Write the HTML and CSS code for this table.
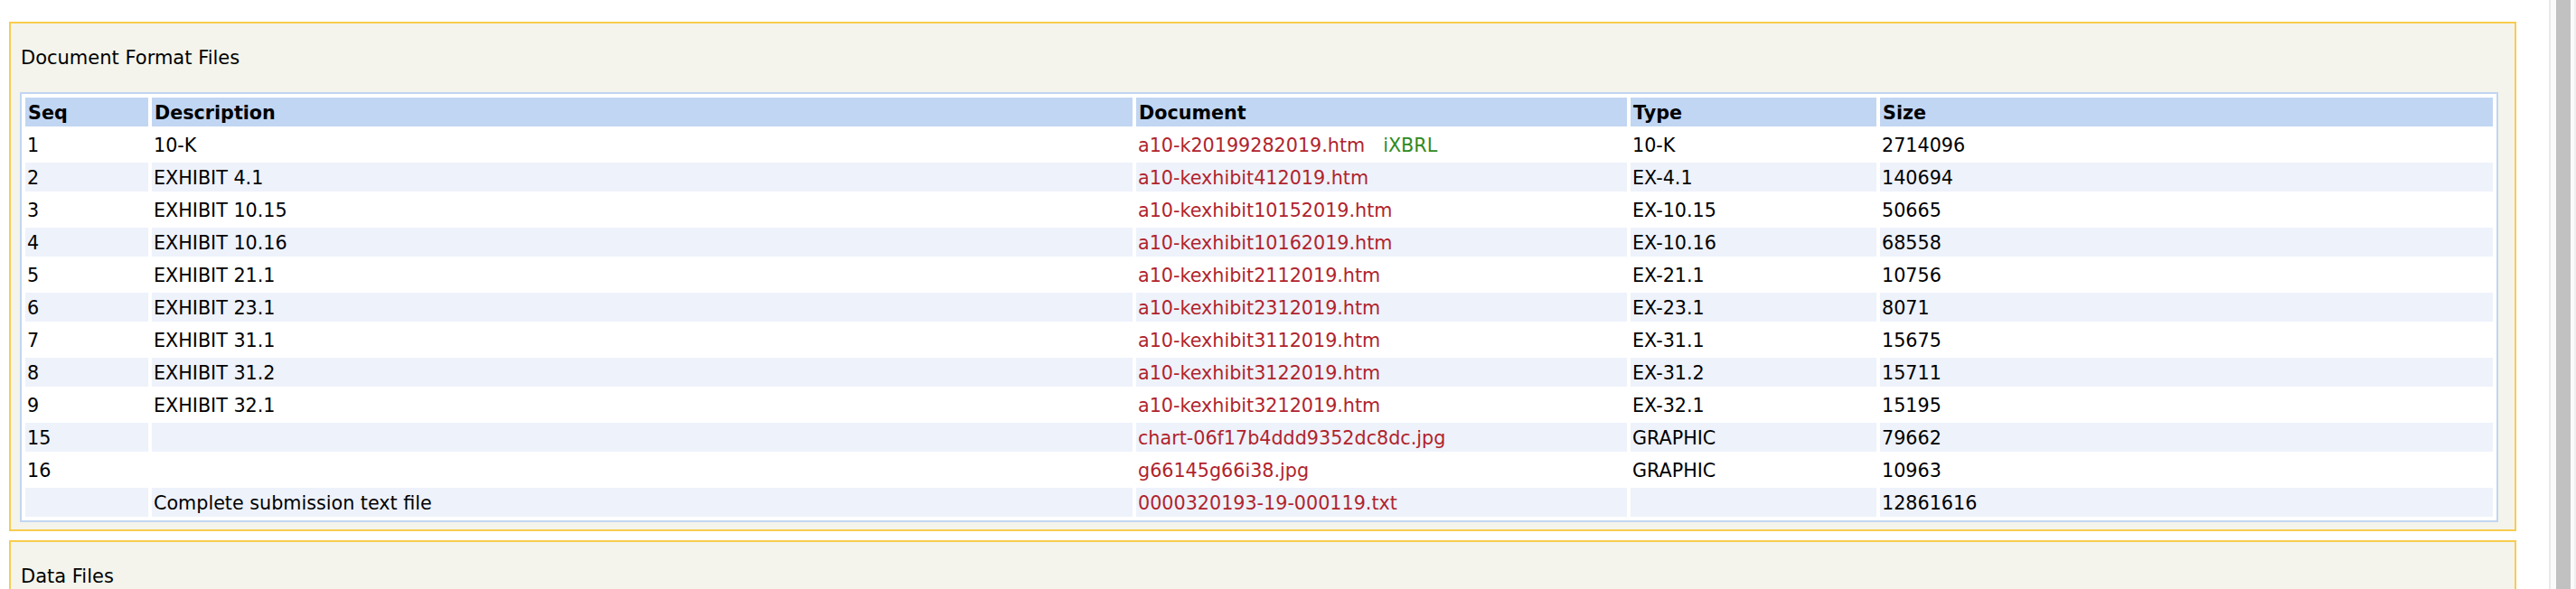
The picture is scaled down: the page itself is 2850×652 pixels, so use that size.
FILE: index.html
```html
<!DOCTYPE html>
<html>
<head>
<meta charset="utf-8">
<title>Document Format Files</title>
<link rel="stylesheet" href="styles.css">
</head>
<body>
<main class="page">
  <section class="box">
    <div class="box-title">Document Format Files</div>
    <table class="files">
      <thead>
        <tr>
          <th class="c-seq">Seq</th>
          <th class="c-desc">Description</th>
          <th class="c-doc">Document</th>
          <th class="c-type">Type</th>
          <th class="c-size">Size</th>
        </tr>
      </thead>
      <tbody>
        <tr><td>1</td><td>10-K</td><td><a href="#">a10-k20199282019.htm</a><span class="ixbrl">iXBRL</span></td><td>10-K</td><td>2714096</td></tr>
        <tr class="alt"><td>2</td><td>EXHIBIT 4.1</td><td><a href="#">a10-kexhibit412019.htm</a></td><td>EX-4.1</td><td>140694</td></tr>
        <tr><td>3</td><td>EXHIBIT 10.15</td><td><a href="#">a10-kexhibit10152019.htm</a></td><td>EX-10.15</td><td>50665</td></tr>
        <tr class="alt"><td>4</td><td>EXHIBIT 10.16</td><td><a href="#">a10-kexhibit10162019.htm</a></td><td>EX-10.16</td><td>68558</td></tr>
        <tr><td>5</td><td>EXHIBIT 21.1</td><td><a href="#">a10-kexhibit2112019.htm</a></td><td>EX-21.1</td><td>10756</td></tr>
        <tr class="alt"><td>6</td><td>EXHIBIT 23.1</td><td><a href="#">a10-kexhibit2312019.htm</a></td><td>EX-23.1</td><td>8071</td></tr>
        <tr><td>7</td><td>EXHIBIT 31.1</td><td><a href="#">a10-kexhibit3112019.htm</a></td><td>EX-31.1</td><td>15675</td></tr>
        <tr class="alt"><td>8</td><td>EXHIBIT 31.2</td><td><a href="#">a10-kexhibit3122019.htm</a></td><td>EX-31.2</td><td>15711</td></tr>
        <tr><td>9</td><td>EXHIBIT 32.1</td><td><a href="#">a10-kexhibit3212019.htm</a></td><td>EX-32.1</td><td>15195</td></tr>
        <tr class="alt"><td>15</td><td></td><td><a href="#">chart-06f17b4ddd9352dc8dc.jpg</a></td><td>GRAPHIC</td><td>79662</td></tr>
        <tr><td>16</td><td></td><td><a href="#">g66145g66i38.jpg</a></td><td>GRAPHIC</td><td>10963</td></tr>
        <tr class="alt"><td>&nbsp;</td><td>Complete submission text file</td><td><a href="#">0000320193-19-000119.txt</a></td><td>&nbsp;</td><td>12861616</td></tr>
      </tbody>
    </table>
  </section>
  <section class="box">
    <div class="box-title">Data Files</div>
    <div class="box-fill"></div>
  </section>
</main>
<aside class="scrollbar"><div class="scroll-track"><div class="scroll-thumb"></div></div></aside>
</body>
</html>
```
FILE: styles.css
```css
html, body {
  margin: 0;
  padding: 0;
  height: 652px;
  overflow: hidden;
  background: #ffffff;
}

body {
  display: flex;
  font-family: "DejaVu Sans", "Liberation Sans", Arial, sans-serif;
  color: #000;
}

.page {
  flex: 1;
  min-width: 0;
  padding: 24px 36px 0 10px;
}

.box {
  border: 2px solid #f8cc4e;
  background: #f4f4ec;
  padding: 0 18px 8px 10px;
  margin-bottom: 10px;
}

.box-title {
  font-size: 21px;
  line-height: 26px;
  padding: 25px 0 25px 1px;
}

.box-fill {
  height: 200px;
}

.files {
  width: 100%;
  table-layout: fixed;
  border: 2px solid #c1d6f1;
  border-spacing: 4px;
  background: #ffffff;
  font-size: 20.7px;
}

.files th,
.files td {
  box-sizing: border-box;
  height: 32px;
  padding: 2px 2px 0 2px;
  line-height: 24px;
  text-align: left;
  vertical-align: middle;
  white-space: nowrap;
  overflow: hidden;
}

.files th {
  background: #c1d6f3;
  font-weight: bold;
  padding-left: 3px;
}

.files .c-seq { width: 136px; }
.files .c-desc { width: 1085px; }
.files .c-doc { width: 543px; }
.files .c-type { width: 272px; }

.files tr.alt td {
  background: #eef2fb;
}

.files a {
  color: #b0242c;
  text-decoration: none;
}

.ixbrl {
  color: #2e8a22;
  margin-left: 20px;
}

.scrollbar {
  width: 30px;
  flex: none;
  display: flex;
}

.scroll-track {
  flex: 1;
  border-left: 2px solid #e9e9e9;
  border-right: 2px solid #efefef;
  background: #fafafa;
  padding: 0 4px 0 6px;
  display: flex;
}

.scroll-thumb {
  flex: 1;
  background: #c1c1c1;
}
```
